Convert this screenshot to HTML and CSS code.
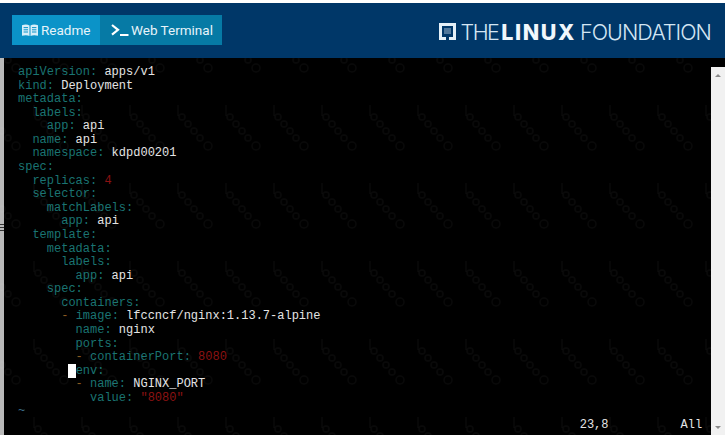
FILE: index.html
```html
<!DOCTYPE html>
<html lang="en">
<head>
<meta charset="utf-8">
<title>Web Terminal</title>
<link rel="stylesheet" href="styles.css">
</head>
<body>
<div class="strip"></div>
<header class="topbar">
  <nav class="tabs">
    <a class="tab tab-readme">
      <svg class="icon-book" viewBox="0 0 16 12" aria-hidden="true"><path fill="#d8eef8" d="M0 1.2C2.5.2 5.5.2 7.5 1.4V12C5.500 10.900 2.500 10.900 0 11.800zM16 1.200C13.500.2 10.500.2 8.500 1.400V12c2-1.100 5-1.100 7.500-.2z"/><path stroke="#0b93c8" stroke-width="1" d="M1.600 3.600h4.400M1.600 5.800h4.400M1.600 8h4.400M10 3.600h4.400M10 5.800h4.400M10 8h4.400"/></svg>
      <span>Readme</span>
    </a>
    <a class="tab tab-term">
      <svg class="icon-term" viewBox="0 0 18 12" aria-hidden="true"><path fill="none" stroke="#fff" stroke-width="2.200" d="M1 1l6 4.800L1 10.600"/><path stroke="#fff" stroke-width="2" d="M9 11h8.500"/></svg>
      <span>Web Terminal</span>
    </a>
  </nav>
  <div class="logo">
    <svg class="logo-mark" viewBox="0 0 17 17" aria-hidden="true"><path fill="#e4f0f8" d="M0 0h17v17H10v-3h4V3H3v11h4v3H0z"/><path fill="#e4f0f8" d="M5 5h7v6H5z" opacity=".35"/></svg>
    <span class="logo-the">THE</span><span class="logo-linux">LINUX</span><span class="logo-foundation">FOUNDATION</span>
  </div>
</header>
<main class="terminal">
  <div class="gutter"><span class="grip"></span></div>
  <pre class="screen"><span class="k">apiVersion:</span> apps/v1
<span class="k">kind:</span> Deployment
<span class="k">metadata:</span>
  <span class="k">labels:</span>
    <span class="k">app:</span> api
  <span class="k">name:</span> api
  <span class="k">namespace:</span> kdpd00201
<span class="k">spec:</span>
  <span class="k">replicas:</span> <span class="n">4</span>
  <span class="k">selector:</span>
    <span class="k">matchLabels:</span>
      <span class="k">app:</span> api
  <span class="k">template:</span>
    <span class="k">metadata:</span>
      <span class="k">labels:</span>
        <span class="k">app:</span> api
    <span class="k">spec:</span>
      <span class="k">containers:</span>
      <span class="d">-</span> <span class="k">image:</span> lfccncf/nginx:1.13.7-alpine
        <span class="k">name:</span> nginx
        <span class="k">ports:</span>
        <span class="d">-</span> <span class="k">containerPort:</span> <span class="n">8080</span>
       <span class="cursor"> </span><span class="k">env:</span>
        <span class="d">-</span> <span class="k">name:</span> NGINX_PORT
          <span class="k">value:</span> <span class="n">"8080"</span>
<span class="tilde">~</span>
                                                                              23,8          All</pre>
  <div class="scrollbar">
    <span class="arrow arrow-up"></span>
    <span class="arrow arrow-down"></span>
  </div>
  <svg class="watermark" aria-hidden="true">
    <defs>
      <pattern id="wm" x="29" y="47" width="48" height="78" patternUnits="userSpaceOnUse">
        <g fill="none" stroke="#fff" stroke-opacity=".035" stroke-width="1.500">
          <path d="M5 0v11"/>
          <circle cx="9" cy="12" r="3"/>
          <circle cx="15" cy="19" r="3"/>
          <circle cx="21" cy="26" r="3"/>
          <circle cx="27" cy="33" r="3"/>
          <circle cx="35" cy="41" r="4"/>
        </g>
      </pattern>
    </defs>
    <rect width="100%" height="100%" fill="url(#wm)"/>
  </svg>
</main>
</body>
</html>
```
FILE: styles.css
```css
* { box-sizing: border-box; }
html, body { margin: 0; padding: 0; height: 100%; overflow: hidden; background: #000; }
body { display: flex; flex-direction: column; width: 725px; height: 435px; }

.strip { height: 3px; background: #fff; flex: none; }

.topbar {
  flex: none;
  height: 55px;
  background: #003768;
  display: flex;
  align-items: center;
  justify-content: space-between;
  padding: 0 14px 0 12px;
}
.tabs { display: flex; margin-bottom: 2px; }
.tab {
  height: 30px;
  display: flex;
  align-items: center;
  gap: 2px;
  color: #e6f4fa;
  font: 13.5px/30px Roboto, sans-serif;
  white-space: nowrap;
}
.tab-readme { width: 88px; padding-left: 10px; background: #0b93c8; }
.tab-term { width: 122px; padding-left: 11px; background: #067aa5; }
.icon-book { width: 16px; height: 12px; margin-right: 1px; }
.icon-term { width: 18px; height: 12px; }

.logo {
  display: flex;
  align-items: center;
  margin-top: 2px;
  color: #d4e6f3;
  font-family: Inter, sans-serif;
  font-size: 21.5px;
  line-height: 24px;
}
.logo-mark { width: 17px; height: 17px; margin-right: 5px; }
.logo-the { font-weight: 300; letter-spacing: -1.600px; }
.logo-linux { font-weight: 800; color: #f0f7fc; margin: 0 4px 0 3px; letter-spacing: 1.600px; }
.logo-foundation { font-weight: 300; letter-spacing: -.95px; }

.terminal { position: relative; flex: 1; display: flex; min-height: 0; background: #000; }
.gutter {
  flex: none;
  width: 4px;
  background: #b9b9b9;
  display: flex;
  align-items: center;
  padding-bottom: 37px;
}
.grip { display: block; width: 4px; height: 8px; background: repeating-linear-gradient(#333 0 1px, #b9b9b9 1px 3px); }
.screen {
  flex: 1;
  margin: 0;
  padding: 8px 0 0 14px;
  font: 12px/13.58px "Liberation Mono", monospace;
  color: #e4e4e4;
  white-space: pre;
  overflow: hidden;
}
.k { color: #1a7472; }
.n { color: #8c1212; }
.d { color: #8a5a22; }
.tilde { color: #3d6f8a; }
.cursor { background: #fff; }
.scrollbar {
  flex: none;
  width: 14px;
  margin-top: 9px;
  background: #f1f1f1;
  display: flex;
  flex-direction: column;
  justify-content: space-between;
  align-items: center;
  padding: 7px 0 6px;
}
.arrow { width: 0; height: 0; border-left: 3px solid transparent; border-right: 3px solid transparent; }
.arrow-up { border-bottom: 3px solid #8a8a8a; }
.arrow-down { border-top: 3px solid #8a8a8a; }
.watermark { position: absolute; left: 0; top: 0; width: 711px; height: 100%; pointer-events: none; }
```
